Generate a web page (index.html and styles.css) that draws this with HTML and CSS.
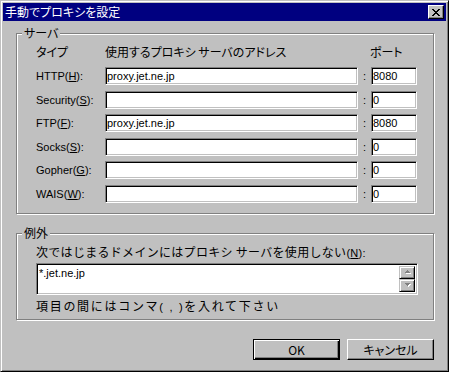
FILE: index.html
```html
<!DOCTYPE html>
<html lang="ja">
<head>
  <meta charset="UTF-8" />
  <title>手動でプロキシを設定</title>
  <link rel="stylesheet" href="styles.css">
</head>
<body>
  <div class="dialog">
    <div class="title-bar">
      <span class="title-text">手動でプロキシを設定</span>
      <button type="button" class="close-btn" aria-label="閉じる">
        <svg width="8" height="7" viewBox="0 0 8 7" shape-rendering="crispEdges">
          <path d="M0 0h2v1h-2zM6 0h2v1h-2zM1 1h2v1h-2zM5 1h2v1h-2zM2 2h4v1h-4zM3 3h2v1h-2zM2 4h4v1h-4zM1 5h2v1h-2zM5 5h2v1h-2zM0 6h2v1h-2zM6 6h2v1h-2z" fill="#000"/>
        </svg>
      </button>
    </div>

    <div class="dialog-body">
      <div class="group servers">
        <span class="group-title">サーバ</span>

        <div class="proxy-grid head-row">
          <span>タイプ</span>
          <span>使用するプロキシ サーバのアドレス</span>
          <span></span>
          <span class="port-head">ポート</span>
        </div>

        <div class="proxy-grid rows">
          <label for="http">HTTP(<u>H</u>):</label>
          <input type="text" id="http" value="proxy.jet.ne.jp" />
          <span class="colon">:</span>
          <input type="text" class="port" value="8080" />

          <label for="security">Security(<u>S</u>):</label>
          <input type="text" id="security" value="" />
          <span class="colon">:</span>
          <input type="text" class="port" value="0" />

          <label for="ftp">FTP(<u>F</u>):</label>
          <input type="text" id="ftp" value="proxy.jet.ne.jp" />
          <span class="colon">:</span>
          <input type="text" class="port" value="8080" />

          <label for="socks">Socks(<u>S</u>):</label>
          <input type="text" id="socks" value="" />
          <span class="colon">:</span>
          <input type="text" class="port" value="0" />

          <label for="gopher">Gopher(<u>G</u>):</label>
          <input type="text" id="gopher" value="" />
          <span class="colon">:</span>
          <input type="text" class="port" value="0" />

          <label for="wais">WAIS(<u>W</u>):</label>
          <input type="text" id="wais" value="" />
          <span class="colon">:</span>
          <input type="text" class="port" value="0" />
        </div>
      </div>

      <div class="group exceptions">
        <span class="group-title">例外</span>
        <div class="ex-label">次ではじまるドメインにはプロキシ サーバを使用しない<span class="latin">(<u>N</u>):</span></div>
        <div class="ex-box">
          <div class="ex-text">*.jet.ne.jp</div>
          <div class="scrollbar">
            <div class="scroll-btn">
              <svg width="7" height="5" viewBox="0 0 7 5" shape-rendering="crispEdges">
                <path d="M4 1h1v1h-1zM3 2h3v1h-3zM2 3h5v1h-5z" fill="#fff"/>
                <path d="M3 0h1v1h-1zM2 1h3v1h-3zM1 2h5v1h-5z" fill="#808080"/>
              </svg>
            </div>
            <div class="scroll-track"></div>
            <div class="scroll-btn">
              <svg width="7" height="5" viewBox="0 0 7 5" shape-rendering="crispEdges">
                <path d="M2 1h5v1h-5zM3 2h3v1h-3zM4 3h1v1h-1z" fill="#fff"/>
                <path d="M1 0h5v1h-5zM2 1h3v1h-3zM3 2h1v1h-1z" fill="#808080"/>
              </svg>
            </div>
          </div>
        </div>
        <div class="ex-note">項目の間にはコンマ<span class="latin">( , )</span>を入れて下さい</div>
      </div>

      <div class="btn-container">
        <button type="button" class="btn default-btn">OK</button>
        <button type="button" class="btn">キャンセル</button>
      </div>
    </div>
  </div>
</body>
</html>
```

FILE: styles.css
```css
body {
  margin: 0;
  background-color: #c0c0c0;
  font-family: "Noto Sans CJK JP", "Liberation Sans", sans-serif;
  font-size: 12px;
  font-feature-settings: "palt";
  color: #000;
}

.latin {
  font-family: "Liberation Sans", sans-serif;
  font-size: 11px;
}

.dialog {
  width: 449px;
  height: 372px;
  box-sizing: border-box;
  border: 1px solid;
  border-color: #c0c0c0 #000 #000 #c0c0c0;
  box-shadow: inset 1px 1px #fff, inset -1px -1px #808080;
  padding: 2px;
  background-color: #c0c0c0;
  display: flex;
  flex-direction: column;
}

.title-bar {
  height: 18px;
  background-color: #000080;
  display: flex;
  align-items: center;
  padding: 0 2px 0 2px;
}

.title-text {
  color: #fff;
  line-height: 18px;
}

.close-btn {
  margin-left: auto;
  width: 16px;
  height: 14px;
  padding: 0;
  box-sizing: border-box;
  border: 1px solid;
  border-color: #fff #000 #000 #fff;
  box-shadow: inset -1px -1px #808080;
  background-color: #c0c0c0;
  display: flex;
  align-items: center;
  justify-content: center;
}

.dialog-body {
  flex: 1;
  display: flex;
  flex-direction: column;
  padding: 12px 12px 0 13px;
}

.group {
  position: relative;
  border: 1px solid #808080;
  box-shadow: inset 1px 1px #fff, 1px 1px #fff;
}

.group-title {
  position: absolute;
  top: -8px;
  left: 5px;
  padding: 0 2px;
  line-height: 14px;
  background-color: #c0c0c0;
}

.servers {
  padding: 11px 16px 10px 19px;
}

.proxy-grid {
  display: grid;
  grid-template-columns: 69px 253px 13px 46px;
}

.head-row {
  line-height: 14px;
  margin-bottom: 8px;
}

.port-head {
  margin-left: -1px;
}

.rows {
  grid-auto-rows: 18px;
  row-gap: 5.5px;
  align-items: center;
}

.rows label {
  font-family: "Liberation Sans", sans-serif;
  font-size: 11px;
  line-height: 14px;
}

.colon {
  text-align: center;
  line-height: 14px;
  font-family: "Liberation Sans", sans-serif;
  font-size: 11px;
}

input[type="text"] {
  width: 100%;
  height: 18px;
  box-sizing: border-box;
  margin: 0;
  padding: 0 0 0 1px;
  border: 1px solid;
  border-color: #808080 #fff #fff #808080;
  box-shadow: inset 1px 1px #000, inset -1px -1px #c0c0c0;
  background-color: #fff;
  font-family: "Liberation Sans", sans-serif;
  font-size: 11px;
  color: #000;
  outline: none;
}

.exceptions {
  margin-top: 19px;
  padding: 11px 15px 5px 19px;
}

.ex-label {
  line-height: 14px;
  font-feature-settings: normal;
  letter-spacing: 0.3px;
}

.ex-box {
  margin-top: 3px;
  height: 32px;
  box-sizing: border-box;
  border: 1px solid;
  border-color: #808080 #fff #fff #808080;
  box-shadow: inset 1px 1px #000, inset -1px -1px #c0c0c0;
  background-color: #fff;
  display: flex;
  padding: 2px;
}

.ex-text {
  flex: 1;
  line-height: 14px;
  font-family: "Liberation Sans", sans-serif;
  font-size: 11px;
}

.scrollbar {
  width: 16px;
  display: flex;
  flex-direction: column;
}

.scroll-btn {
  height: 13px;
  box-sizing: border-box;
  border: 1px solid;
  border-color: #c0c0c0 #000 #000 #c0c0c0;
  box-shadow: inset 1px 1px #fff, inset -1px -1px #808080;
  background-color: #c0c0c0;
  display: flex;
  align-items: center;
  justify-content: center;
}

.scroll-track {
  flex: 1;
  background: repeating-conic-gradient(#fff 0 25%, #c0c0c0 0 50%) 0 0 / 2px 2px;
}

.ex-note {
  margin-top: 4px;
  line-height: 14px;
  font-feature-settings: normal;
  letter-spacing: 1.7px;
}

.btn-container {
  display: flex;
  justify-content: flex-end;
  gap: 7px;
  margin-top: 19px;
}

.btn {
  width: 87px;
  height: 21px;
  box-sizing: border-box;
  padding: 0;
  border: 1px solid;
  border-color: #fff #000 #000 #fff;
  box-shadow: inset -1px -1px #808080;
  background-color: #c0c0c0;
  font: inherit;
  font-feature-settings: "palt";
  color: #000;
}

.default-btn {
  border-color: #000;
  box-shadow: inset 1px 1px #fff, inset -1px -1px #000, inset -2px -2px #808080;
}
```
